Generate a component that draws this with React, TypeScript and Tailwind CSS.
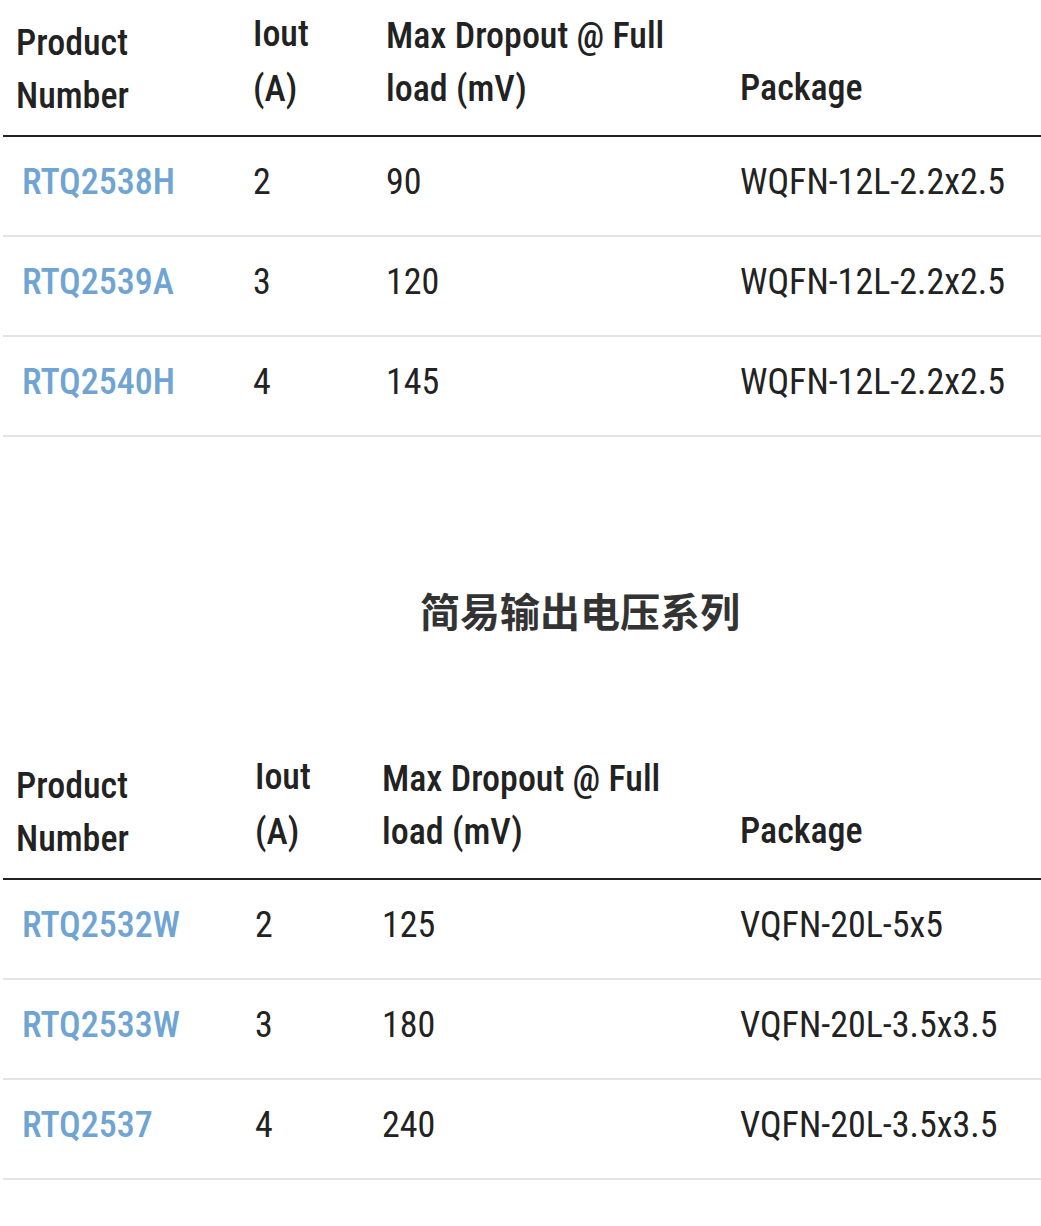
import React from "react";

type Row = { pn: string; iout: string; drop: string; pkg: string };

const t1: Row[] = [
  { pn: "RTQ2538H", iout: "2", drop: "90", pkg: "WQFN-12L-2.2x2.5" },
  { pn: "RTQ2539A", iout: "3", drop: "120", pkg: "WQFN-12L-2.2x2.5" },
  { pn: "RTQ2540H", iout: "4", drop: "145", pkg: "WQFN-12L-2.2x2.5" },
];
const t2: Row[] = [
  { pn: "RTQ2532W", iout: "2", drop: "125", pkg: "VQFN-20L-5x5" },
  { pn: "RTQ2533W", iout: "3", drop: "180", pkg: "VQFN-20L-3.5x3.5" },
  { pn: "RTQ2537", iout: "4", drop: "240", pkg: "VQFN-20L-3.5x3.5" },
];

function Table({ rows, widths }: { rows: Row[]; widths: [string, string, string] }) {
  return (
    <table className="ml-[3px] w-[1038px] table-fixed border-collapse">
      <colgroup>
        <col className={widths[0]} />
        <col className={widths[1]} />
        <col className={widths[2]} />
        <col />
      </colgroup>
      <thead>
        <tr className="h-[136px] border-b-2 border-[#222]">
          <th className="pl-[13px] pb-[12px] text-left align-bottom text-[36px] leading-[53px] font-medium text-[#222]">
            Product
            <br />
            Number
          </th>
          <th className="pl-[13px] pb-[18px] text-left align-bottom text-[36px] leading-[55px] font-medium text-[#222]">
            Iout
            <br />
            (A)
          </th>
          <th className="pl-[13px] pb-[19px] text-left align-bottom text-[36px] leading-[53px] font-medium text-[#222]">
            Max Dropout @ Full
            <br />
            load (mV)
          </th>
          <th className="pl-[13px] pb-[20px] text-left align-bottom text-[36px] leading-[53px] font-medium text-[#222]">
            Package
          </th>
        </tr>
      </thead>
      <tbody>
        {rows.map((r) => (
          <tr key={r.pn} className="h-[100px] border-b-2 border-[#e3e3e3]">
            <td className="pl-[19px] pb-[8px] align-middle">
              <a className="text-[36px] font-medium text-[#6fa4d3]">{r.pn}</a>
            </td>
            <td className="pl-[13px] pb-[8px] align-middle text-[36px] text-[#222]">{r.iout}</td>
            <td className="pl-[13px] pb-[8px] align-middle text-[36px] text-[#222]">{r.drop}</td>
            <td className="pl-[13px] pb-[8px] align-middle text-[36px] text-[#222]">{r.pkg}</td>
          </tr>
        ))}
      </tbody>
    </table>
  );
}

export default function App() {
  return (
    <div
      className="w-[1041px] min-h-[1226px] bg-white font-stretch-condensed"
      style={{ fontFamily: '"Roboto Condensed", Roboto, "Noto Sans CJK SC", sans-serif' }}
    >
      <Table rows={t1} widths={["w-[237px]", "w-[133px]", "w-[354px]"]} />
      <div className="pt-[143px] pb-[103px] pl-[119px] text-center">
        <h2
          className="text-[40px] leading-[60px] font-bold text-[#333]"
          style={{ fontFamily: '"Noto Sans CJK SC", sans-serif' }}
        >
          简易输出电压系列
        </h2>
      </div>
      <Table rows={t2} widths={["w-[239px]", "w-[127px]", "w-[358px]"]} />
    </div>
  );
}
